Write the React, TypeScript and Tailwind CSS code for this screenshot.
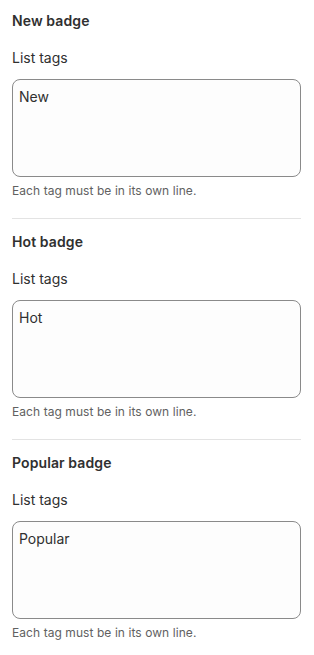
const badges = [
    { title: 'New badge', value: 'New' },
    { title: 'Hot badge', value: 'Hot' },
    { title: 'Popular badge', value: 'Popular' },
]

function BadgeSection({ title, value, last }: { title: string; value: string; last: boolean }) {
    return (
        <div className="flex flex-col">
            <h2 className="text-[14px] leading-5 font-semibold tracking-[0.1px] text-[#303030]">{title}</h2>
            <label className="mt-[17px] text-[14px] leading-5 text-[#303030]">List tags</label>
            <textarea
                defaultValue={value}
                className="mt-[11px] h-[98px] w-full resize-none rounded-[8px] border border-[#8a8a8a] bg-[#fdfdfd] px-[6px] pt-[7px] text-[14px] leading-5 text-[#303030] outline-none"
            />
            <p className="mt-[6px] text-[12px] leading-4 tracking-[0.07px] text-[#616161]">Each tag must be in its own line.</p>
            {!last && <div className="mt-[19px] mb-[13px] h-px bg-[#e3e3e3]" />}
        </div>
    )
}

export default function App() {
    return (
        <div className="min-h-screen bg-white" style={{ fontFamily: 'Inter, "Noto Sans", sans-serif' }}>
            <div className="ml-3 w-[289px] pt-[11px]">
                {badges.map((b, i) => (
                    <BadgeSection key={b.title} title={b.title} value={b.value} last={i === badges.length - 1} />
                ))}
            </div>
        </div>
    )
}
